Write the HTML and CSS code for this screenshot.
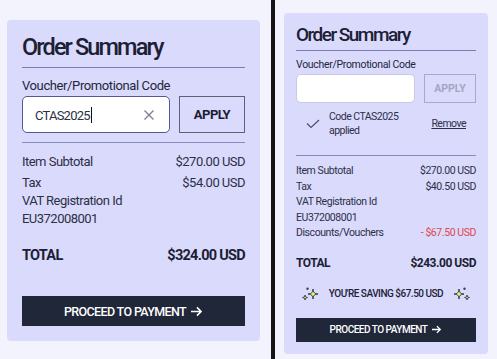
FILE: index.html
```html
<!DOCTYPE html>
<html lang="en">
<head>
    <meta charset="UTF-8">
    <meta name="viewport" content="width=device-width, initial-scale=1.0">
    <title>Order Summary</title>
    <link rel="stylesheet" href="styles.css">
</head>
<body>
    <div class="page">
        <!-- Etat 1 : code saisi, pas encore appliqué -->
        <div class="pane pane-left">
            <section class="summary summary-lg">
                <h2 class="summary-title">Order Summary</h2>
                <label class="field-label">Voucher/Promotional Code</label>
                <div class="voucher-row">
                    <div class="voucher-input is-active">
                        <span class="voucher-text">CTAS2025<span class="caret"></span></span>
                        <svg class="clear-icon" viewBox="0 0 12 12" width="12" height="12">
                            <path d="M1.5 1.5 L10.5 10.5 M10.5 1.5 L1.5 10.5" stroke="#7d8296" stroke-width="1.4" fill="none"/>
                        </svg>
                    </div>
                    <button class="apply-btn">APPLY</button>
                </div>
                <div class="lines">
                    <div class="line"><span>Item Subtotal</span><span>$270.00 USD</span></div>
                    <div class="line line-gap"><span>Tax</span><span>$54.00 USD</span></div>
                    <div class="line"><span>VAT Registration Id</span></div>
                    <div class="line"><span>EU372008001</span></div>
                </div>
                <div class="total"><span>TOTAL</span><span>$324.00 USD</span></div>
                <button class="pay-btn">PROCEED TO PAYMENT
                    <svg viewBox="0 0 14 12" width="13" height="11">
                        <path d="M1 6 H12 M7.5 1.5 L12 6 L7.5 10.5" stroke="#fff" stroke-width="1.7" fill="none"/>
                    </svg>
                </button>
            </section>
        </div>

        <div class="split"></div>

        <!-- Etat 2 : code appliqué -->
        <div class="pane pane-right">
            <section class="summary summary-sm">
                <h2 class="summary-title">Order Summary</h2>
                <label class="field-label">Voucher/Promotional Code</label>
                <div class="voucher-row">
                    <div class="voucher-input"></div>
                    <button class="apply-btn" disabled>APPLY</button>
                </div>
                <div class="applied">
                    <svg class="check-icon" viewBox="0 0 14 10" width="14" height="10">
                        <path d="M1 4.5 L5 8.5 L13 1" stroke="#4b5068" stroke-width="1.2" fill="none"/>
                    </svg>
                    <span class="applied-text">Code CTAS2025<br>applied</span>
                    <a class="remove-link" href="#">Remove</a>
                </div>
                <div class="lines">
                    <div class="line"><span>Item Subtotal</span><span>$270.00 USD</span></div>
                    <div class="line"><span>Tax</span><span>$40.50 USD</span></div>
                    <div class="line"><span>VAT Registration Id</span></div>
                    <div class="line"><span>EU372008001</span></div>
                    <div class="line"><span>Discounts/Vouchers</span><span class="discount">- $67.50 USD</span></div>
                </div>
                <div class="total"><span>TOTAL</span><span>$243.00 USD</span></div>
                <div class="saving">
                    <svg class="sparkle" viewBox="0 0 18 14" width="18" height="14">
                        <path d="M12 2 Q12 7 17 7 Q12 7 12 12 Q12 7 7 7 Q12 7 12 2 Z" fill="#eef26a" stroke="#2a2f45" stroke-width="0.9"/>
                        <path d="M4 8 Q4 10.5 6.5 10.5 Q4 10.5 4 13 Q4 10.5 1.5 10.5 Q4 10.5 4 8 Z" fill="#eef26a" stroke="#2a2f45" stroke-width="0.8"/>
                        <circle cx="6.5" cy="1.8" r="1.2" fill="#3a3f55"/>
                    </svg>
                    <span>YOU'RE SAVING $67.50 USD</span>
                    <svg class="sparkle" viewBox="0 0 18 14" width="18" height="14">
                        <path d="M6 2 Q6 7 11 7 Q6 7 6 12 Q6 7 1 7 Q6 7 6 2 Z" fill="#eef26a" stroke="#2a2f45" stroke-width="0.9"/>
                        <path d="M14 8 Q14 10.5 16.5 10.5 Q14 10.5 14 13 Q14 10.5 11.5 10.5 Q14 10.5 14 8 Z" fill="#eef26a" stroke="#2a2f45" stroke-width="0.8"/>
                        <circle cx="11.5" cy="1.8" r="1.2" fill="#3a3f55"/>
                    </svg>
                </div>
                <button class="pay-btn">PROCEED TO PAYMENT
                    <svg viewBox="0 0 14 12" width="11" height="9">
                        <path d="M1 6 H12 M7.5 1.5 L12 6 L7.5 10.5" stroke="#fff" stroke-width="1.8" fill="none"/>
                    </svg>
                </button>
            </section>
        </div>
    </div>
</body>
</html>
```

FILE: styles.css
```css
body {
    margin: 0;
    font-family: Roboto, "Liberation Sans", sans-serif;
    background-color: #f3f3fd;
    color: #2c3045;
}
.page {
    display: flex;
    height: 100vh;
}
.pane {
    box-sizing: border-box;
}
.pane-left {
    width: 271px;
    padding: 20px 0 0 7px;
}
.pane-right {
    flex: 1;
    padding: 13px 0 0 9px;
}
.split {
    width: 4px;
    background-color: #151515;
}
.summary {
    box-sizing: border-box;
    background-color: #dadafd;
    border-radius: 4px;
}
.summary-title {
    margin: 0;
    font-weight: 500;
    color: #1c2033;
    border-bottom: 1px solid #7b7bb0;
}
.field-label {
    display: block;
    color: #23273a;
}
.voucher-row {
    display: flex;
}
.voucher-input {
    flex: 1;
    box-sizing: border-box;
    display: flex;
    align-items: center;
    background-color: #fff;
    border: 1px solid #c9c9e2;
    border-radius: 5px;
}
.voucher-input.is-active {
    border: 1.5px solid #54588e;
}
.voucher-text {
    flex: 1;
    color: #2c3045;
}
.caret {
    display: inline-block;
    width: 1px;
    height: 16px;
    margin-left: 1px;
    vertical-align: -3px;
    background-color: #111;
}
.apply-btn {
    box-sizing: border-box;
    background: transparent;
    border: 1px solid #5e6078;
    font-family: inherit;
    font-weight: 700;
    color: #1c2033;
    padding: 0;
}
.apply-btn:disabled {
    border-color: #a9a9cb;
    color: #a2a6c2;
}
.lines {
    border-top: 1px solid #8a8abd;
}
.line, .total {
    display: flex;
    justify-content: space-between;
}
.total {
    font-weight: 700;
    color: #1c2033;
}
.discount {
    color: #e0474c;
}
.pay-btn {
    display: flex;
    align-items: center;
    justify-content: center;
    gap: 4px;
    width: 100%;
    box-sizing: border-box;
    padding: 0;
    border: none;
    background-color: #1f2739;
    color: #fff;
    font-family: inherit;
    font-weight: 500;
    letter-spacing: -0.05em;
}

/* grand format */
.summary-lg {
    width: 253px;
    padding: 13px 15px 15px;
}
.summary-lg .summary-title {
    font-size: 23.5px;
    line-height: 28px;
    letter-spacing: -0.08em;
    padding-bottom: 6px;
}
.summary-lg .field-label {
    font-size: 13px;
    line-height: 16px;
    letter-spacing: -0.03em;
    margin: 10px 0 2px;
}
.summary-lg .voucher-row {
    gap: 9px;
    height: 37px;
}
.summary-lg .voucher-text {
    font-size: 13px;
    letter-spacing: -0.06em;
    padding-left: 12px;
}
.summary-lg .clear-icon {
    margin-right: 14px;
}
.summary-lg .apply-btn {
    width: 66px;
    font-size: 13px;
    letter-spacing: -0.04em;
}
.summary-lg .lines {
    margin-top: 9px;
    padding-top: 10px;
    font-size: 13px;
    line-height: 18px;
    letter-spacing: -0.04em;
}
.summary-lg .line-gap {
    margin-top: 3px;
}
.summary-lg .total {
    margin-top: 18px;
    font-size: 14.5px;
    line-height: 20px;
    letter-spacing: -0.05em;
}
.summary-lg .pay-btn {
    margin-top: 30px;
    height: 30px;
    font-size: 12.5px;
}

/* petit format */
.summary-sm {
    width: 204px;
    padding: 11px 12px 12px;
}
.summary-sm .summary-title {
    font-size: 19px;
    line-height: 22px;
    letter-spacing: -0.08em;
    padding-bottom: 4px;
}
.summary-sm .field-label {
    font-size: 10.5px;
    line-height: 13px;
    letter-spacing: -0.03em;
    margin: 7px 0 3px;
}
.summary-sm .voucher-row {
    gap: 9px;
    height: 29px;
}
.summary-sm .apply-btn {
    width: 52px;
    font-size: 10.5px;
}
.applied {
    display: flex;
    align-items: center;
    margin-top: 7px;
    padding: 0 10px;
    font-size: 10.5px;
    line-height: 14px;
    letter-spacing: -0.05em;
}
.check-icon {
    margin-right: 9px;
}
.applied-text {
    flex: 1;
}
.remove-link {
    color: #2c3045;
    text-decoration: underline;
}
.summary-sm .lines {
    margin-top: 17px;
    padding-top: 7px;
    font-size: 10.5px;
    line-height: 15.5px;
    letter-spacing: -0.04em;
}
.summary-sm .total {
    margin-top: 13px;
    font-size: 12px;
    line-height: 18px;
    letter-spacing: -0.04em;
}
.saving {
    display: flex;
    align-items: center;
    justify-content: center;
    gap: 10px;
    margin-top: 13px;
    line-height: 18px;
    font-size: 10px;
    font-weight: 500;
    letter-spacing: -0.05em;
    color: #1c2033;
}
.summary-sm .pay-btn {
    margin-top: 15px;
    height: 24px;
    font-size: 10px;
}
```
